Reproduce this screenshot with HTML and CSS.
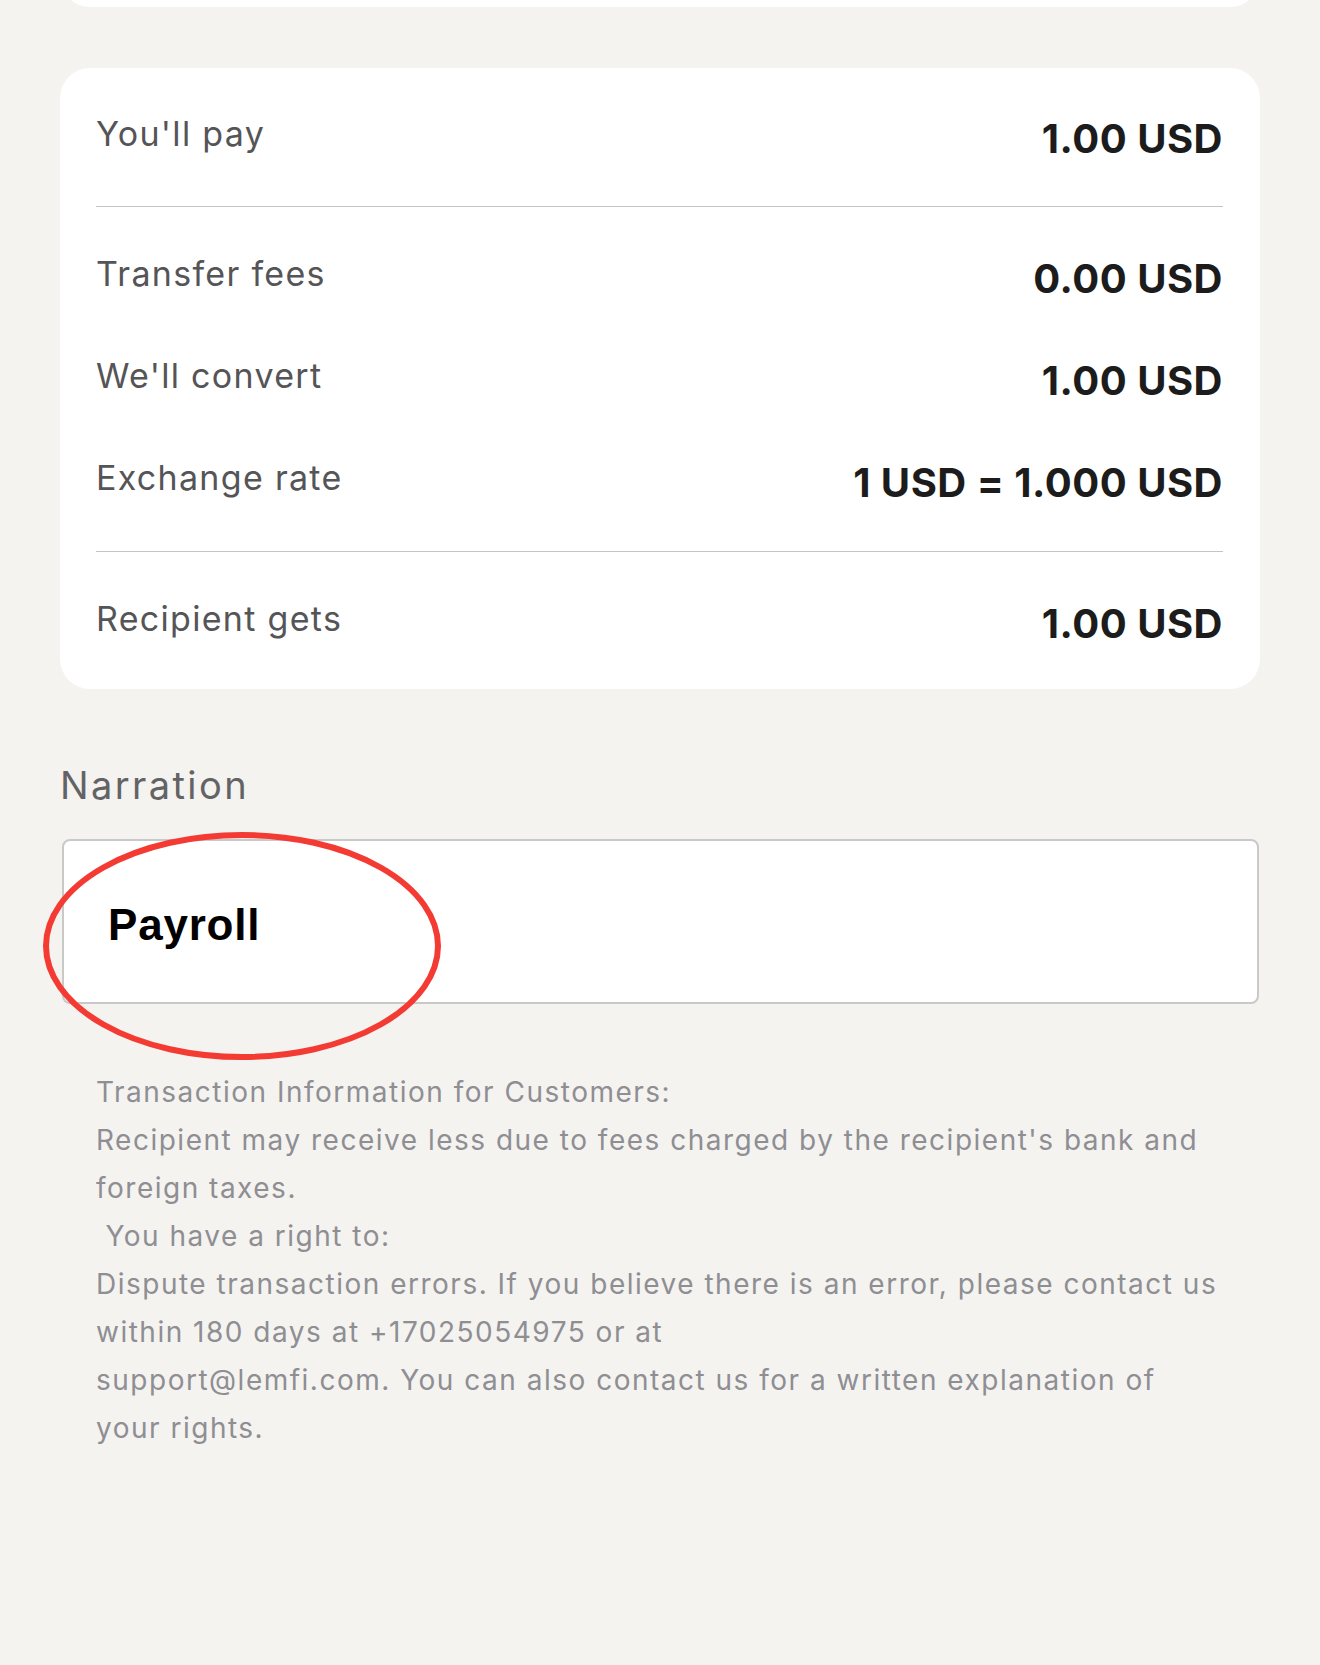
FILE: index.html
```html
<!DOCTYPE html>
<html lang="en">
<head>
    <meta charset="UTF-8">
    <meta name="viewport" content="width=device-width, initial-scale=1.0">
    <title>Review transfer</title>
    <link rel="stylesheet" href="styles.css">
</head>
<body>

<div class="page">

    <!-- tail of the card above, scrolled out of view -->
    <div class="prev-card"></div>

    <div class="summary-card">
        <div class="group group-top">
            <div class="row">
                <span class="label">You'll pay</span>
                <span class="value">1.00 USD</span>
            </div>
        </div>
        <div class="group group-mid">
            <div class="row">
                <span class="label">Transfer fees</span>
                <span class="value">0.00 USD</span>
            </div>
            <div class="row">
                <span class="label">We'll convert</span>
                <span class="value">1.00 USD</span>
            </div>
            <div class="row">
                <span class="label">Exchange rate</span>
                <span class="value">1 USD = 1.000 USD</span>
            </div>
        </div>
        <div class="group group-bottom">
            <div class="row">
                <span class="label">Recipient gets</span>
                <span class="value">1.00 USD</span>
            </div>
        </div>
    </div>

    <div class="narration">
        <label class="narration-label" for="narration-input">Narration</label>
        <div class="narration-field">
            <div class="narration-input" id="narration-input">Payroll</div>
            <svg class="highlight" width="400" height="230" viewBox="0 0 400 230">
                <ellipse cx="200" cy="115" rx="196" ry="111" fill="none" stroke="#f43b33" stroke-width="6"/>
            </svg>
        </div>
    </div>

    <p class="disclaimer">Transaction Information for Customers:<br>Recipient may receive less due to fees charged by the recipient's bank and foreign taxes.<br>&nbsp;You have a right to:<br>Dispute transaction errors. If you believe there is an error, please contact us within 180 days at +17025054975 or at<br>support@lemfi.com. You can also contact us for a written explanation of your rights.</p>

</div>

</body>
</html>
```

FILE: styles.css
```css
body {
    margin: 0;
    background-color: #f4f3f0;
    font-family: Inter, "Open Sans", sans-serif;
}

.page {
    padding: 0 60px 100px;
}

.prev-card {
    height: 60px;
    margin-top: -53px;
    background-color: #fff;
    border-radius: 0 0 30px 30px;
}

.summary-card {
    margin-top: 61px;
    background-color: #fff;
    border-radius: 30px;
    padding: 46px 37px 42px 36px;
}

.group-top {
    padding-bottom: 44px;
}

.group-mid {
    border-top: 1px solid #c4c4c4;
    border-bottom: 1px solid #c4c4c4;
    padding: 47px 0 45px;
    display: flex;
    flex-direction: column;
    gap: 54px;
}

.group-bottom {
    padding-top: 47px;
}

.row {
    display: flex;
    justify-content: space-between;
    align-items: flex-start;
    height: 48px;
}

.label {
    font-size: 34px;
    line-height: 40px;
    color: #555557;
    letter-spacing: 1.3px;
}

.value {
    font-size: 40px;
    line-height: 48px;
    font-weight: 700;
    color: #1c1c1c;
    margin-top: 1px;
    letter-spacing: 0.5px;
}

.narration {
    margin-top: 73px;
}

.narration-label {
    display: block;
    font-size: 38px;
    line-height: 46px;
    color: #636366;
    letter-spacing: 2.4px;
    margin-bottom: 31px;
}

.narration-field {
    position: relative;
    margin-left: 2px;
    margin-right: 1px;
}

.narration-input {
    box-sizing: border-box;
    height: 165px;
    display: flex;
    align-items: center;
    padding: 6px 0 0 44px;
    background-color: #fff;
    border: 2.5px solid #c9c9c9;
    border-radius: 8px;
    font-family: "Liberation Sans", Arial, sans-serif;
    font-weight: 700;
    font-size: 44px;
    letter-spacing: 0.8px;
    color: #000;
}

.highlight {
    position: absolute;
    left: -20px;
    top: -8px;
    pointer-events: none;
}

.disclaimer {
    margin: 64px 0 0;
    padding: 0 36px;
    font-size: 28px;
    line-height: 48px;
    letter-spacing: 1.5px;
    color: #8e8e93;
}
```
